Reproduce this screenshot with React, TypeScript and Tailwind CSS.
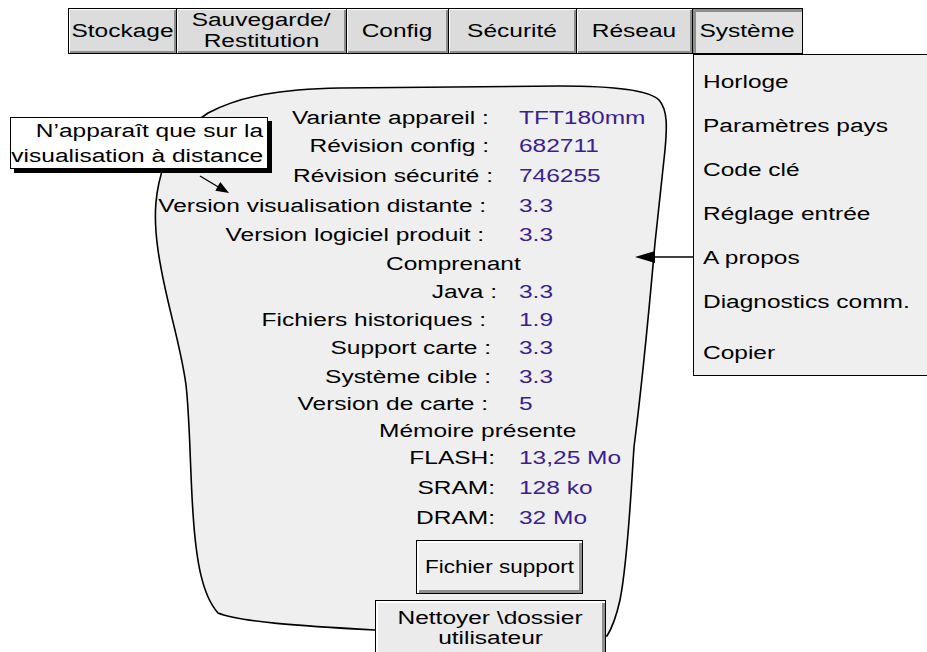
import type { ReactNode } from "react"

// the whole screen capture is stretched horizontally, so text is widened with scale-x
function Wide({
  children,
  className = "",
  scale = "scale-x-[1.36]",
}: {
  children: ReactNode
  className?: string
  scale?: string
}) {
  return <span className={`inline-block whitespace-nowrap ${scale} ${className}`}>{children}</span>
}

const TABS = [
  { lines: ["Stockage"], w: "w-[109px]" },
  { lines: ["Sauvegarde/", "Restitution"], w: "w-[170px]" },
  { lines: ["Config"], w: "w-[102px]" },
  { lines: ["Sécurité"], w: "w-[128px]" },
  { lines: ["Réseau"], w: "w-[116px]" },
  { lines: ["Système"], w: "w-[110px]", active: true },
]

const MENU = ["Horloge", "Paramètres pays", "Code clé", "Réglage entrée", "A propos", "Diagnostics comm."]

type Row = { h: string; label?: string; value?: string; pr?: string; heading?: string; pl?: string }

const ROWS: Row[] = [
  { h: "h-[28px]", label: "Variante appareil :", value: "TFT180mm", pr: "pr-[8px]" },
  { h: "h-[29px]", label: "Révision config :", value: "682711", pr: "pr-[8px]" },
  { h: "h-[30px]", label: "Révision sécurité :", value: "746255", pr: "pr-[4px]" },
  { h: "h-[30px]", label: "Version visualisation distante :", value: "3.3", pr: "pr-[11px]" },
  { h: "h-[29px]", label: "Version logiciel produit :", value: "3.3", pr: "pr-[13px]" },
  { h: "h-[28px]", heading: "Comprenant", pl: "pl-[386px]" },
  { h: "h-[28px]", label: "Java :", value: "3.3" },
  { h: "h-[28px]", label: "Fichiers historiques :", value: "1.9", pr: "pr-[11px]" },
  { h: "h-[29px]", label: "Support carte :", value: "3.3", pr: "pr-[6px]" },
  { h: "h-[28px]", label: "Système cible :", value: "3.3", pr: "pr-[6px]" },
  { h: "h-[27px]", label: "Version de carte :", value: "5", pr: "pr-[9px]" },
  { h: "h-[26px]", heading: "Mémoire présente", pl: "pl-[379px]" },
  { h: "h-[29px]", label: "FLASH:", value: "13,25 Mo", pr: "pr-[2px]" },
  { h: "h-[30px]", label: "SRAM:", value: "128 ko", pr: "pr-[2px]" },
  { h: "h-[30px]", label: "DRAM:", value: "32 Mo", pr: "pr-[2px]" },
]

export default function App() {
  return (
    <div className="relative w-[927px] h-[652px] overflow-hidden bg-white text-black text-[18px] leading-[21px] font-['Liberation_Sans',Arial,sans-serif]">
      {/* cloud outline behind the "A propos" page */}
      <svg className="absolute left-0 top-0" width="927" height="652">
        <path
          d="M 208 113 C 240 96, 280 89, 340 88 L 560 86 C 610 86, 648 89, 659 100 C 668 110, 667 128, 665 150 L 655 243 C 650 300, 640 400, 634 447 C 631 490, 628 560, 620 600 C 616 618, 612 628, 607 636 L 375 630 C 300 626, 240 622, 218 613 C 202 595, 196 560, 193 513 C 190 470, 190 420, 186 385 C 180 340, 165 300, 158 250 C 153 215, 155 190, 165 162 C 175 140, 190 125, 208 113 Z"
          fill="#efefef"
          stroke="#000"
          strokeWidth="1.6"
        />
      </svg>

      <div className="relative">
        {/* Tabs */}
        <div className="flex pt-[8px] pl-[68px]">
          {TABS.map((t, i) => (
            <div
              key={t.lines[0]}
              className={`${t.w} h-[46px] flex flex-col items-center justify-center border-y border-r border-black ${
                i === 0 ? "border-l" : ""
              } ${
                t.active
                  ? "bg-[#e2e2e2] shadow-[inset_3px_3px_0_#8e8e8e]"
                  : "bg-[#dcdcdc] shadow-[inset_1px_1px_0_#ffffff,inset_-2px_-2px_0_#8e8e8e]"
              }`}
            >
              {t.lines.map((l) => (
                <Wide key={l}>{l}</Wide>
              ))}
            </div>
          ))}
        </div>

        {/* Info rows */}
        <div className="mt-[50px] flex flex-col">
          {ROWS.map((r, i) =>
            r.heading ? (
              <div key={i} className={`flex items-center ${r.h} ${r.pl}`}>
                <Wide className="origin-left">{r.heading}</Wide>
              </div>
            ) : (
              <div key={i} className={`flex items-center ${r.h}`}>
                <div className={`w-[497px] shrink-0 text-right ${r.pr ?? ""}`}>
                  <Wide className="origin-right">{r.label}</Wide>
                </div>
                <div className="pl-[22px] text-[#3c1e8c]">
                  <Wide className="origin-left">{r.value}</Wide>
                </div>
              </div>
            ),
          )}
        </div>

        <div className="ml-[416px] mt-[7px] w-[167px] h-[54px] flex items-center justify-center border border-black bg-[#efefef] shadow-[inset_2px_2px_0_#ffffff,inset_-3px_-3px_0_#8e8e8e]">
          <Wide scale="scale-x-[1.25]">Fichier support</Wide>
        </div>

        <div className="ml-[375px] mt-[6px] w-[231px] h-[60px] flex flex-col items-center pt-[7px] leading-[20px] border border-black bg-[#ebebeb] shadow-[inset_2px_2px_0_#ffffff,inset_-3px_-3px_0_#8e8e8e]">
          <Wide>Nettoyer \dossier</Wide>
          <Wide>utilisateur</Wide>
        </div>
      </div>

      {/* Callout */}
      <div className="absolute left-[10px] top-[117px] w-[258px] h-[52px] border border-black bg-white shadow-[4px_4px_0_#000] text-right pr-[4px] pt-px leading-[25px]">
        <div>
          <Wide className="origin-right">N’apparaît que sur la</Wide>
        </div>
        <div>
          <Wide className="origin-right">visualisation à distance</Wide>
        </div>
      </div>

      {/* Système drop-down */}
      <div className="absolute left-[693px] top-[54px] w-[250px] h-[322px] border border-black bg-[#efefef] pt-[5px] pl-[9px]">
        {MENU.map((m) => (
          <div key={m} className="h-[44px] flex items-center">
            <Wide className="origin-left">{m}</Wide>
          </div>
        ))}
        <div className="h-[44px] mt-[7px] flex items-center">
          <Wide className="origin-left">Copier</Wide>
        </div>
      </div>

      {/* Pointer arrows */}
      <svg className="absolute left-0 top-0 pointer-events-none" width="927" height="652">
        <line x1="200" y1="176" x2="220" y2="188" stroke="#000" strokeWidth="1.4" />
        <polygon points="229,193 215.3,190.7 220.3,182.1" fill="#000" />
        <line x1="693" y1="257" x2="652" y2="257" stroke="#000" strokeWidth="1.4" />
        <polygon points="635,257 655,251 655,263" fill="#000" />
      </svg>
    </div>
  )
}
